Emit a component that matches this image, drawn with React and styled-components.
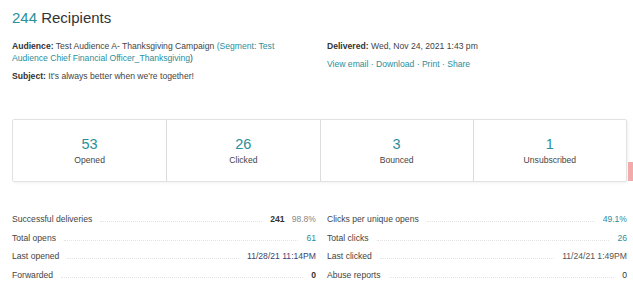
import React from "react";
import styled, { createGlobalStyle } from "styled-components";

const Global = createGlobalStyle`
  html, body { margin: 0; padding: 0; background: #fff; }
  body { font-family: "Liberation Sans", Arial, sans-serif; color: #333; }
`;

const Page = styled.div`
  width: 633px;
  height: 300px;
  box-sizing: border-box;
  padding: 8px 6px 0 12px;
  position: relative;
  overflow: hidden;
`;

const Title = styled.h1`
  margin: 0;
  font-size: 15px;
  font-weight: 400;
  color: #333;
  line-height: 20px;
  span { color: #2b8e9b; }
`;

const Info = styled.div`
  display: grid;
  grid-template-columns: 315px 1fr;
  margin-top: 12px;
  font-size: 8.6px;
  line-height: 12px;
`;

const Col = styled.div`
  display: flex;
  flex-direction: column;
  gap: ${p => p.$gap || 6}px;
`;

const Line = styled.div`
  color: #444;
  b { font-weight: 700; color: #333; }
`;

const Link = styled.span`
  color: #2b8e9b;
`;

const Cards = styled.div`
  display: grid;
  grid-template-columns: repeat(4, 1fr);
  margin-top: 37px;
  width: 615px;
  height: 63px;
  border: 1px solid #e2e2e2;
  border-radius: 2px;
  box-shadow: 1px 1px 3px rgba(0,0,0,0.06);
  box-sizing: border-box;
`;

const Card = styled.div`
  display: flex;
  flex-direction: column;
  align-items: center;
  justify-content: center;
  border-left: ${p => (p.$first ? "none" : "1px solid #dcdcdc")};
`;

const Num = styled.div`
  font-size: 14.5px;
  line-height: 16px;
  color: #2b8e9b;
`;

const Label = styled.div`
  margin-top: 3px;
  font-size: 8.6px;
  color: #444;
`;

const Stats = styled.div`
  display: grid;
  grid-template-columns: 304px 300px;
  column-gap: 11px;
  margin-top: 32px;
`;

const Row = styled.div`
  display: flex;
  align-items: baseline;
  height: 18.7px;
  font-size: 8.6px;
  color: #444;
`;

const Leader = styled.div`
  flex: 1;
  margin: 0 8px;
  border-bottom: 1px dotted #e4e4e4;
`;

const Value = styled.span`
  color: ${p => p.$color || "#333"};
  font-weight: ${p => (p.$bold ? 700 : 400)};
`;

const Pct = styled.span`
  color: #888;
  margin-left: 7px;
`;

const RedTab = styled.div`
  position: absolute;
  right: 0;
  top: 162px;
  width: 5px;
  height: 19px;
  background: #f3aaaa;
`;

const StatRow = ({ label, children }) => (
  <Row>
    <span>{label}</span>
    <Leader />
    {children}
  </Row>
);

const cards = [
  ["53", "Opened"],
  ["26", "Clicked"],
  ["3", "Bounced"],
  ["1", "Unsubscribed"],
];

export default function App() {
  return (
    <Page>
      <Global />
      <Title><span>244</span> Recipients</Title>
      <Info>
        <Col $gap={6}>
          <Line>
            <b>Audience:</b> Test Audience A- Thanksgiving Campaign{" "}
            <Link>(Segment: Test<br />Audience Chief Financial Officer_Thanksgiving</Link>)
          </Line>
          <Line><b>Subject:</b> It's always better when we're together!</Line>
        </Col>
        <Col $gap={6}>
          <Line><b>Delivered:</b> Wed, Nov 24, 2021 1:43 pm</Line>
          <Line><Link>View email · Download · Print · Share</Link></Line>
        </Col>
      </Info>
      <Cards>
        {cards.map(([n, l], i) => (
          <Card key={l} $first={i === 0}>
            <Num>{n}</Num>
            <Label>{l}</Label>
          </Card>
        ))}
      </Cards>
      <Stats>
        <div>
          <StatRow label="Successful deliveries">
            <span><Value $bold>241</Value><Pct>98.8%</Pct></span>
          </StatRow>
          <StatRow label="Total opens"><Value $color="#2b8e9b">61</Value></StatRow>
          <StatRow label="Last opened"><Value $color="#3d3f6e">11/28/21 11:14PM</Value></StatRow>
          <StatRow label="Forwarded"><Value $bold>0</Value></StatRow>
        </div>
        <div>
          <StatRow label="Clicks per unique opens"><Value $color="#2b8e9b">49.1%</Value></StatRow>
          <StatRow label="Total clicks"><Value $color="#2b8e9b">26</Value></StatRow>
          <StatRow label="Last clicked"><Value $color="#555">11/24/21 1:49PM</Value></StatRow>
          <StatRow label="Abuse reports"><Value>0</Value></StatRow>
        </div>
      </Stats>
      <RedTab />
    </Page>
  );
}
